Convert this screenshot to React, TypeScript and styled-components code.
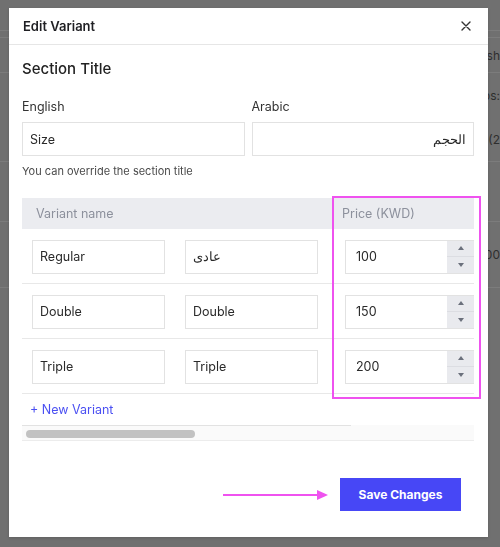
import React from 'react'
import styled, { createGlobalStyle } from 'styled-components'

const GlobalStyle = createGlobalStyle`
  html, body {
    margin: 0;
    padding: 0;
    height: 100%;
    overflow: hidden;
    background: #707070;
    font-family: Inter, "Noto Sans", "Liberation Sans", sans-serif;
  }
  * { box-sizing: border-box; }
`

// page behind the dimmed overlay, only its right edge peeks out
const Page = styled.div`
  display: flex;
  flex-direction: column;
`

const PageRow = styled.div<{ h: number }>`
  height: ${p => p.h}px;
  border-bottom: 1px solid #7c7c7c;
  display: flex;
  flex-direction: column;
  justify-content: space-around;
  align-items: flex-end;
  font-size: 12px;
  color: #2e2e2e;
  white-space: nowrap;
`

const Overlay = styled.div`
  position: fixed;
  inset: 0;
  padding: 8px 12px 10px 9px;
  display: flex;
`

const Modal = styled.div`
  position: relative;
  flex: 1;
  background: #fff;
  display: flex;
  flex-direction: column;
  box-shadow: 0 1px 3px rgba(0, 0, 0, 0.15);
`

const Header = styled.div`
  height: 37px;
  flex-shrink: 0;
  display: flex;
  align-items: center;
  justify-content: space-between;
  padding: 0 16px 0 14px;
  border-bottom: 1px solid #e6e6e6;
`

const Title = styled.h1`
  margin: 0;
  font-size: 13px;
  font-weight: 600;
  color: #1f1f23;
`

const CloseButton = styled.button`
  border: 0;
  background: none;
  padding: 0;
  width: 12px;
  height: 12px;
  display: flex;
  align-items: center;
  justify-content: center;
  color: #333;
`

const Body = styled.div`
  padding: 15px 14px 0 13px;
  display: flex;
  flex-direction: column;
`

const SectionTitle = styled.h2`
  margin: 0;
  font-size: 15px;
  line-height: 18px;
  font-weight: 500;
  color: #222;
`

const TitleFields = styled.div`
  margin-top: 21px;
  display: grid;
  grid-template-columns: 1fr 1fr;
  column-gap: 7px;
  row-gap: 7px;
`

const Label = styled.label`
  font-size: 12.5px;
  line-height: 16px;
  color: #333;
`

const TextInput = styled.input<{ rtl?: boolean }>`
  height: 34px;
  width: 100%;
  border: 1px solid #e2e2e2;
  border-radius: 0;
  padding: 0 7px;
  font-family: inherit;
  font-size: 12.5px;
  color: #2a2a2a;
  background: #fff;
  outline: none;
  direction: ${p => (p.rtl ? 'rtl' : 'ltr')};
`

const Helper = styled.p`
  margin: 8px 0 0;
  font-size: 11px;
  line-height: 14px;
  color: #4a4a4a;
`

const Table = styled.div`
  margin-top: 20px;
  display: flex;
  flex-direction: column;
`

const TableHead = styled.div`
  height: 31px;
  background: #ebecf0;
  display: grid;
  grid-template-columns: 306px 1fr;
  align-items: center;
  padding-left: 14px;
  font-size: 12.5px;
  color: #8c909c;
`

const Row = styled.div`
  height: 55px;
  border-bottom: 1px solid #e8e8e8;
  display: grid;
  grid-template-columns: 133px 133px 136px;
  column-gap: 20px;
  align-items: center;
  padding: 1px 0 0 10px;

  & > :nth-child(3) {
    margin-left: 7px;
  }
`

const PriceField = styled.div`
  height: 34px;
  display: flex;
  border: 1px solid #e2e2e2;
  border-right: 0;
`

const PriceInput = styled.input`
  flex: 1;
  min-width: 0;
  border: 0;
  padding: 0 10px;
  font-family: inherit;
  font-size: 12.5px;
  color: #2a2a2a;
  outline: none;
`

const Stepper = styled.div`
  width: 27px;
  background: #e9eaee;
  display: flex;
  flex-direction: column;
`

const StepButton = styled.button<{ down?: boolean }>`
  flex: 1;
  border: 0;
  padding: 0;
  background: none;
  display: flex;
  align-items: center;
  justify-content: center;
  border-top: ${p => (p.down ? '1px solid #dcdde2' : '0')};

  &::after {
    content: '';
    border-left: 3.5px solid transparent;
    border-right: 3.5px solid transparent;
    ${p => (p.down ? 'border-top: 4px solid #6b707c;' : 'border-bottom: 4px solid #6b707c;')}
  }
`

const AddVariant = styled.button`
  height: 31px;
  border: 0;
  background: none;
  padding: 0 0 0 8px;
  text-align: left;
  font-family: inherit;
  font-size: 12.5px;
  color: #4b50f2;
`

const ScrollTrack = styled.div`
  height: 16px;
  background: linear-gradient(#e2e2e2, #e2e2e2) top left / 329px 1px no-repeat, #fafafa;
  border-bottom: 1px solid #ececec;
  padding: 5px 4px 3px;
  display: flex;
`

const ScrollThumb = styled.div`
  width: 169px;
  height: 8px;
  border-radius: 4px;
  background: #c2c2c2;
`

const Footer = styled.div`
  margin-top: auto;
  padding: 0 27px 26px 0;
  display: flex;
  justify-content: flex-end;
  align-items: center;
  gap: 11px;
`

const SaveButton = styled.button`
  width: 121px;
  height: 33px;
  border: 0;
  background: #4747f6;
  color: #fff;
  font-family: inherit;
  font-size: 12px;
  font-weight: 700;
`

// annotation drawn over the price column
const Highlight = styled.div`
  position: absolute;
  left: 323px;
  top: 188px;
  width: 149px;
  height: 203px;
  border: 2px solid #ef52ef;
  pointer-events: none;
`

const variants = [
  { en: 'Regular', ar: 'عادى', price: '100' },
  { en: 'Double', ar: 'Double', price: '150' },
  { en: 'Triple', ar: 'Triple', price: '200' },
]

export default function App() {
  return (
    <>
      <GlobalStyle />
      <Page>
        <PageRow h={31} />
        <PageRow h={7} />
        <PageRow h={35}>
          <span>ish</span>
        </PageRow>
        <PageRow h={89}>
          <span>ps:</span>
          <span>(2</span>
        </PageRow>
        <PageRow h={60} />
        <PageRow h={66}>
          <span>00</span>
        </PageRow>
      </Page>
      <Overlay>
        <Modal>
          <Header>
            <Title>Edit Variant</Title>
            <CloseButton aria-label="close">
              <svg width="10" height="10" viewBox="0 0 10 10">
                <path d="M1 1 L9 9 M9 1 L1 9" stroke="currentColor" strokeWidth="1.4" strokeLinecap="round" />
              </svg>
            </CloseButton>
          </Header>
          <Body>
            <SectionTitle>Section Title</SectionTitle>
            <TitleFields>
              <Label>English</Label>
              <Label>Arabic</Label>
              <TextInput readOnly value="Size" />
              <TextInput readOnly rtl value="الحجم" />
            </TitleFields>
            <Helper>You can override the section title</Helper>
            <Table>
              <TableHead>
                <span>Variant name</span>
                <span>Price (KWD)</span>
              </TableHead>
              {variants.map(v => (
                <Row key={v.price}>
                  <TextInput readOnly value={v.en} />
                  <TextInput readOnly value={v.ar} />
                  <PriceField>
                    <PriceInput readOnly value={v.price} />
                    <Stepper>
                      <StepButton aria-label="increase" />
                      <StepButton aria-label="decrease" down />
                    </Stepper>
                  </PriceField>
                </Row>
              ))}
              <AddVariant>+ New Variant</AddVariant>
              <ScrollTrack>
                <ScrollThumb />
              </ScrollTrack>
            </Table>
          </Body>
          <Footer>
            <svg width="106" height="12" viewBox="0 0 106 12">
              <path d="M0 6 H95" stroke="#ef52ef" strokeWidth="2" />
              <path d="M94 1 L105 6 L94 11 Z" fill="#ef52ef" />
            </svg>
            <SaveButton>Save Changes</SaveButton>
          </Footer>
          <Highlight />
        </Modal>
      </Overlay>
    </>
  )
}
